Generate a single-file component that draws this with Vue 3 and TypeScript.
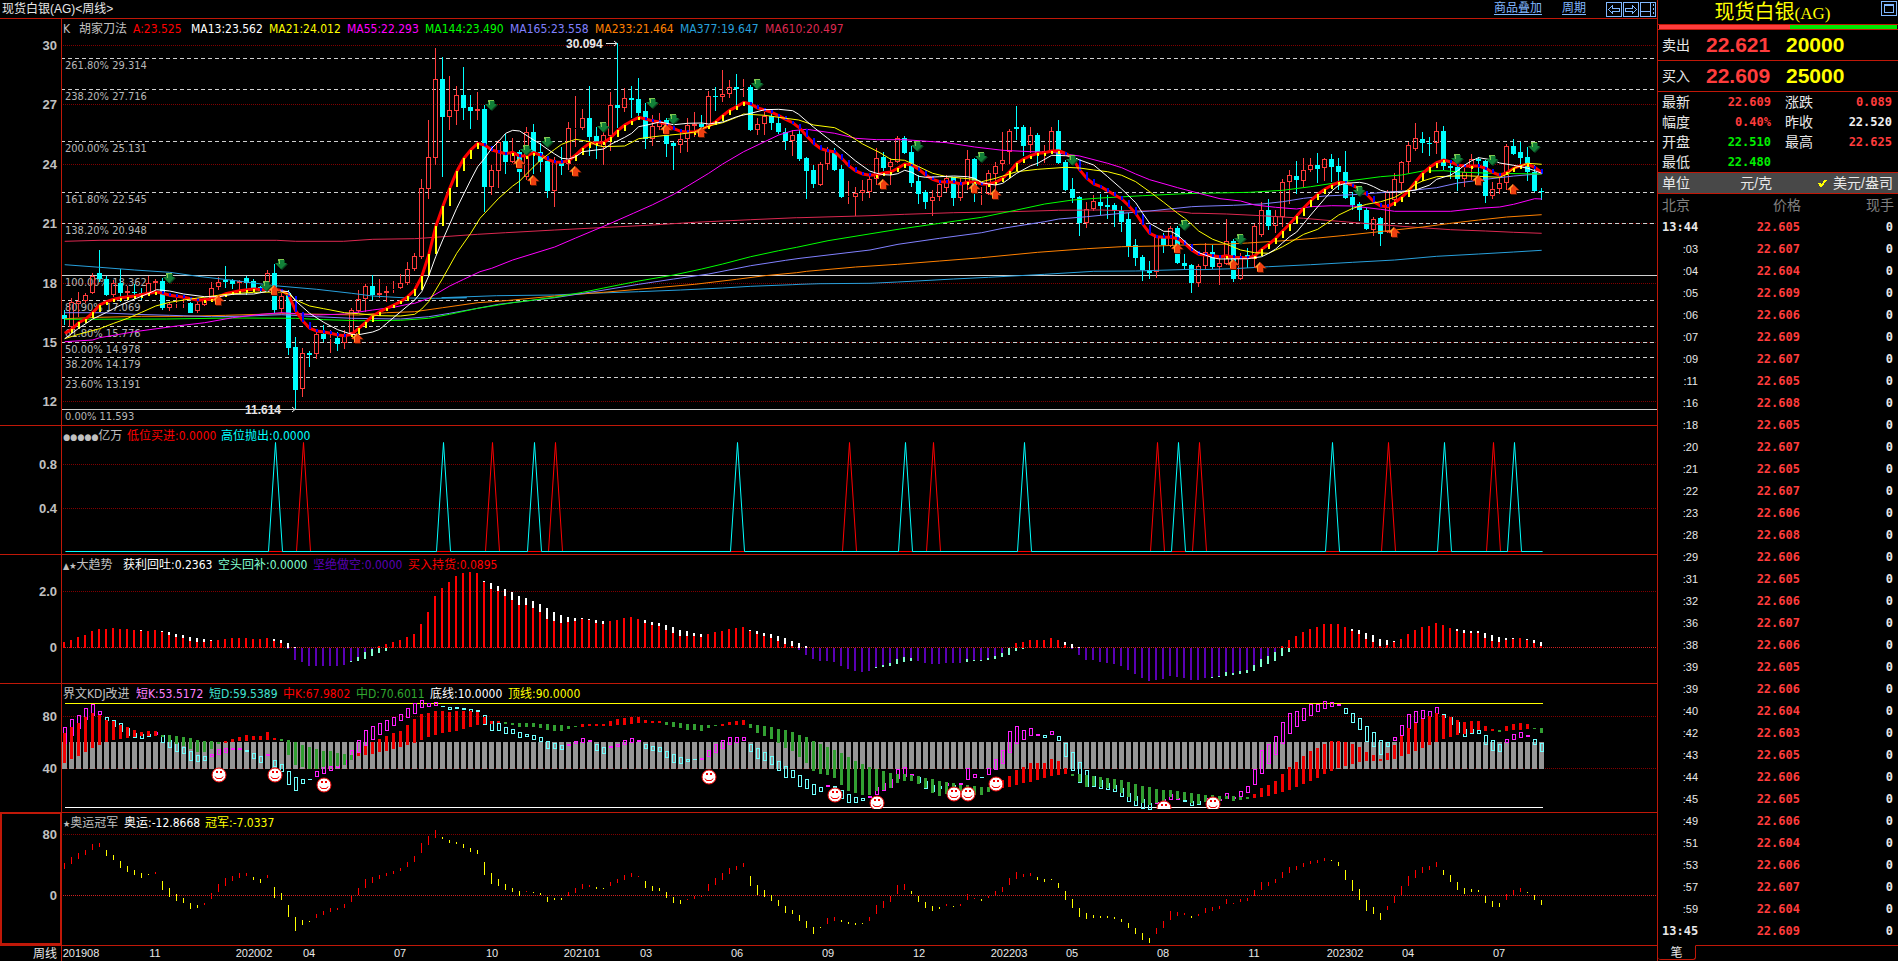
<script setup lang="ts">
interface LegendItem { text: string; color: string; width: number; badge?: string }
interface Bar { x: number; y: number; h: number; kind: string }

const STEP = 7
const FIRST = 64
const barX = (i: number): number => FIRST + STEP * i
const words = (s: string): string[] => s.trim().split(/\s+/)

/* ---------- price panel ---------- */
const PRICE_UNITS = 3
const toPx = (v: number): number => Math.round(v / PRICE_UNITS)

// direction + high, body top, body bottom, low (three units to a pixel)
const candleRows = `
d930,945,957,975 u893,905,980,985 u877,903,912,950 u880,885,902,910 u820,828,878,882 d750,819,838,845 d827,838,884,888 u840,850,884,890
d808,850,878,905 u857,873,878,900 d852,875,879,895 d865,878,882,900 u828,850,878,884 u838,843,850,870 d834,843,923,930 u905,913,923,933
u893,908,911,925 u898,908,910,923 d906,908,938,939 u905,912,934,938 u893,900,914,918 u845,865,893,898 u832,847,862,870 d798,839,845,865
d838,841,852,868 u840,844,848,873 d827,833,850,885 d838,843,864,870 d858,860,872,875 u810,819,845,872 d792,819,930,940 u880,888,928,940
d870,878,1044,1065 d1011,1041,1170,1227 u1045,1060,1168,1190 d1053,1059,1065,1101 u995,1003,1063,1077 d975,1001,1018,1027 u990,1013,1016,1060 d995,1014,1031,1052
u990,1003,1030,1047 u923,931,1000,1010 u870,898,932,940 u852,859,898,935 d826,858,886,900 u838,880,884,893 u858,874,880,905 u843,866,871,880
u822,850,864,868 u786,808,850,855 u760,768,808,812 u537,565,770,778 u360,472,566,597 u144,238,473,494 d170,238,350,530 u228,331,350,390
u258,286,332,375 d200,285,323,360 d285,321,332,387 u276,327,332,360 d315,327,560,635 u495,511,560,585 u420,427,512,563 d402,423,485,521
u415,457,485,490 d450,455,515,577 u381,397,530,540 d372,397,457,522 d430,455,486,515 d478,483,572,594 u470,485,572,620 d440,483,497,525
u366,384,492,510 u288,384,387,440 u327,355,385,390 d258,354,410,468 d380,408,430,477 u395,406,440,494 u276,316,407,452 d129,315,323,385
u264,295,323,335 d258,294,300,355 d234,297,338,347 d310,333,418,447 u345,378,418,437 u338,367,380,390 d355,360,432,471 d425,429,437,510
u390,417,436,458 u355,376,418,455 u336,372,377,410 d345,371,380,405 u273,289,380,385 d261,288,291,333 u210,283,290,305 u240,262,281,293
d222,262,267,318 u237,262,265,290 d255,262,390,393 u355,371,389,404 u335,347,371,405 d340,347,369,390 d350,368,395,402 d385,396,423,450
u390,406,423,467 d385,402,477,483 d470,474,513,597 d495,510,552,563 u486,493,554,558 u441,450,493,510 d444,457,510,514 d495,508,590,594
u543,588,592,612 u561,580,590,648 u540,571,580,603 u520,538,575,594 u444,475,536,555 d456,471,504,512 u475,485,500,555 u407,414,485,490
d408,414,459,462 d438,456,549,560 d525,543,582,612 d570,577,606,627 u570,592,602,648 u545,553,590,602 u525,535,563,577 d530,532,593,617
u535,550,593,603 u450,478,550,570 d473,477,583,606 u560,583,586,615 u510,520,583,585 u487,499,521,583 u396,479,493,513 u387,394,455,492
d318,381,386,420 d375,381,437,468 u381,406,434,460 d400,405,458,498 u435,452,458,489 u381,394,452,460 d360,393,489,492 d480,486,570,573
d534,567,594,609 d588,591,669,708 u606,628,668,684 u585,604,628,633 d583,606,618,645 d585,616,622,657 d609,615,632,681 d617,632,666,696
d640,657,738,771 d717,735,773,798 d765,771,811,843 d783,811,820,837 u705,710,816,834 d700,711,736,759 u678,685,738,742 d678,684,790,793
d762,789,798,810 d793,796,849,879 u793,799,849,861 u729,757,799,808 d735,756,801,808 u770,790,800,855 u657,724,792,795 d718,723,836,846
u760,767,836,840 d745,766,772,805 u672,679,778,803 u606,631,704,710 d597,630,678,690 u630,649,677,698 u537,547,652,680 u510,526,545,612
d483,528,541,582 u474,511,542,562 u474,496,510,515 d459,495,507,549 u473,478,503,543 d462,477,501,545 d474,498,516,570 d453,516,594,597
d575,591,615,630 d605,612,630,663 d625,630,687,690 u652,657,689,708 d650,654,702,738 u570,577,695,698 u519,538,600,610 u483,486,550,570
u426,436,487,518 u368,415,446,453 d396,417,429,460 d411,429,432,468 u365,394,430,462 d378,393,498,510 d490,498,504,537 d495,501,537,573
u505,517,537,561 u462,478,505,540 d470,477,483,528 d480,483,588,609 u546,568,588,597 u535,549,567,582 u432,438,549,570 d417,438,462,465
d426,456,474,495 d441,471,516,543 d495,516,573,577 d564,573,576,600`

const candles = words(candleRows).map((row, i) => {
  const [high, top, bottom, low] = row.slice(1).split(',').map(v => toPx(Number(v)))
  return { x: barX(i), up: row[0] === 'u', high, top, bottom: Math.max(bottom, top + 1), low }
})

// Each curve is stored in four stretches, 400 px apart
type Point = [number, number]
const curve = (...parts: string[]): Point[] =>
  parts.flatMap((part, n) => words(part).map((p): Point => {
    const [x, y] = p.split(',').map(Number)
    return [(x + n * 1200) / PRICE_UNITS, y / PRICE_UNITS]
  }))
const pointsOf = (c: Point[]): string => c.map(([x, y]) => `${x.toFixed(1)},${y.toFixed(1)}`).join(' ')

const knife = curve(
  '194,1000 215,988 236,968 257,957 278,938 299,915 320,905 341,898 362,893 404,888 446,880 470,876 488,880 509,886 551,892 593,901 635,897 656,890 677,881 719,872 761,867 803,870 824,868 845,872 866,885 887,933 908,962 929,985 950,993 971,996 992,1000 1013,1005 1034,1007 1055,1003 1076,985 1097,967 1118,948 1139,935 1160,925 1181,915 1202,905 1223,890 1244,870 1265,830 1286,765 1307,680 1328,620 1349,565 1370,515 1391,476 1412,450 1433,430',
  '254,435 275,450 296,456 317,461 338,457 359,468 380,467 401,458 422,465 443,478 464,486 485,487 506,482 527,465 548,445 569,430 590,428 611,428 632,413 653,392 674,375 695,363 716,352 737,357 758,363 779,366 800,374 821,386 842,394 863,397 884,395 905,388 926,378 947,365 968,347 989,331 1010,320 1031,307 1052,312 1073,324 1094,330 1115,337 1136,347 1157,358 1178,368 1199,384 1220,408 1241,430 1262,446 1283,452 1304,456 1325,475 1346,497 1367,513 1388,522 1409,526 1430,524',
  '251,519 272,516 293,505 314,492 335,494 356,508 377,525 398,538 419,545 461,547 482,552 503,547 524,545 545,552 566,552 587,547 608,535 629,515 650,490 671,477 692,467 713,460 734,458 755,453 776,452 797,460 818,475 839,510 860,535 881,552 902,560 923,572 944,585 965,597 986,617 1007,640 1028,672 1049,700 1070,710 1091,712 1112,712 1133,716 1154,730 1175,750 1196,763 1238,767 1259,770 1280,767 1301,772 1343,774 1364,768 1385,748 1406,733 1427,715',
  '248,693 269,672 290,648 311,624 332,602 353,583 374,568 395,556 416,547 437,548 458,556 479,567 500,583 521,605 542,618 563,620 584,608 605,592 626,572 647,545 668,520 689,502 710,488 731,480 752,486 773,495 794,498 836,498 857,505 878,517 899,526 920,518 941,505 962,497 983,493 1004,502 1025,518',
)

const valueAt = (c: Point[], x: number): number => {
  for (let k = 1; k < c.length; k++) {
    const [x0, y0] = c[k - 1]
    const [x1, y1] = c[k]
    if (x <= x1) return y0 + ((y1 - y0) * (x - x0)) / (x1 - x0)
  }
  return c[c.length - 1][1]
}
const slopes = candles.slice(1).map(({ x }) => {
  const now = valueAt(knife, x + 1)
  const before = valueAt(knife, x + 1 - STEP)
  const rising = now <= before
  const h = Math.max(3, Math.round(Math.abs(now - before)))
  return { x, y: Math.round(rising ? now : now - h + 1), h, color: rising ? '#ffff00' : '#0000ff' }
})

const averages = [
  { color: '#dc2850', points: pointsOf(curve('194,724 300,721 830,721 887,724 1030,724 1118,718 1244,716 1433,703', '317,698 464,690 600,683 758,675 884,667 1052,659 1190,653', '0,653 210,647 314,643 461,638 629,635 776,631 902,630 965,632 1133,634 1175,640', '0,640 80,642 185,647 311,655 416,664 542,674 647,682 752,689 857,693 941,697 1025,700')) },
  { color: '#28a0dc', points: pointsOf(curve('194,794 299,802 404,810 509,817 593,829 698,841 824,857 950,868 1055,880 1118,888 1223,894 1307,895 1400,893', '125,893 290,887 464,885 569,880 716,875 842,870 968,864 1052,859 1178,854', '0,853 60,851 210,850 293,846 461,837 566,832 734,823 881,814 1007,813 1175,808', '0,809 101,806 206,800 332,794 458,787 584,780 710,769 836,762 941,756 1025,751')) },
  { color: '#ff8000', points: pointsOf(curve('194,956 299,952 425,949 551,949 677,946 845,941 971,943 1076,945 1160,938 1244,935 1328,923 1433,908', '317,902 464,888 611,877 758,864 884,853 1010,838 1094,827 1190,818', '20,814 167,801 293,793 419,783 545,773 713,757 860,746 965,740 1070,738 1175,734', '0,733 60,733 143,729 269,721 353,714 437,706 521,697 584,690 668,681 752,670 836,660 920,651 1025,644')) },
  { color: '#8080ff', points: pointsOf(curve('194,938 299,938 404,943 509,946 635,950 719,949 845,944 950,950 1055,955 1202,957 1286,950 1349,940 1433,925', '296,913 464,893 600,872 716,853 821,837 926,822 1052,797 1157,781', '0,775 84,765 210,750 294,733 419,715 545,698 608,685 734,665 776,657 860,650 965,640 1049,633 1175,620', '0,619 100,616 185,612 248,605 311,595 374,588 458,584 542,578 626,572 710,563 773,549 857,538 941,528 1025,521')) },
  { color: '#00ff00', points: pointsOf(curve('194,958 500,957 698,954 887,955 971,959 1076,962 1202,961 1286,955 1349,943 1433,925', '338,908 464,892 548,877 611,864 716,843 821,825 905,807 968,792 1052,770 1136,752 1190,742', '84,722 294,688 419,670 545,652 650,630 734,612 818,600 902,594 1028,587 1154,581', '0,580 150,577 248,571 332,560 437,544 542,530 605,525 668,513 731,512 794,517 878,520 1025,522')) },
  { color: '#ff00ff', points: pointsOf(curve('194,1025 278,1020 299,1013 404,995 530,978 614,968 698,953 782,943 845,938 950,945 1034,942 1118,930 1181,922 1223,913 1244,910 1286,895 1349,858 1391,838 1440,815', '275,805 338,780 464,741 527,714 632,670 700,640 758,614 821,583 863,558 926,520 968,492 1031,455 1094,425 1136,405 1178,392', '20,388 104,400 167,415 230,419 314,419 440,428 524,441 608,451 692,455 755,457 839,468 923,490 965,503 1007,522 1049,539 1133,563 1190,578', '60,596 122,603 164,615 227,622 290,627 332,620 395,617 458,618 542,628 584,634 752,634 836,625 899,621 941,613 1004,596 1025,597')) },
]
const fastAverages = [
  { color: '#ffff00', points: pointsOf(curve('194,1016 236,1003 299,986 341,970 383,955 425,937 467,918 509,907 551,900 593,894 677,883 761,877 845,876 866,882 887,900 929,918 971,926 1034,938 1076,941 1139,947 1202,948 1244,943 1265,927 1286,905 1307,870 1328,835 1370,760 1412,700 1440,655', '254,640 296,595 338,558 359,543 401,500 422,480 443,464 464,448 485,433 506,425 527,418 569,425 590,436 611,440 674,438 716,416 779,408 842,402 884,396 926,378 968,368 1010,352 1031,342 1094,346 1157,355 1196,360', '41,375 104,383 146,405 188,432 240,458 272,478 314,481 356,500 398,520 440,530 482,534 524,538 545,545 587,535 608,528 650,515 713,508 797,502 839,504 881,510 923,515 965,526 1007,545 1049,575 1091,607 1133,640 1154,655 1175,673 1196,693', '38,718 80,733 122,750 164,758 206,760 227,750 248,740 269,728 311,703 353,688 395,660 416,645 458,625 500,613 542,605 584,592 626,568 647,552 668,543 710,530 794,527 899,532 920,523 941,505 983,490 1025,493')) },
  { color: '#ffffff', points: pointsOf(curve('194,1016 236,985 278,957 320,937 362,915 404,897 446,880 470,869 509,873 551,882 614,890 656,890 698,883 761,882 803,874 845,873 866,875 887,903 929,940 971,967 1013,989 1055,1003 1076,1004 1118,996 1139,988 1160,970 1202,935 1244,900 1265,875 1286,828 1307,770 1328,720 1370,625 1412,540 1433,500', '254,475 275,445 296,424 317,400 338,391 359,393 401,420 422,433 443,448 464,462 485,475 506,477 527,470 548,455 611,447 632,433 674,412 695,400 716,380 737,376 779,366 821,374 863,370 905,369 926,372 968,366 1010,350 1052,340 1094,329 1136,328 1178,332 1196,343', '41,382 83,415 125,448 167,483 209,513 230,520 251,524 272,525 293,521 314,511 335,517 356,529 377,532 419,530 461,528 503,530 524,535 545,548 566,552 587,555 608,550 650,520 692,497 713,490 755,466 797,467 818,470 839,480 881,495 923,530 965,567 1007,608 1028,640 1049,670 1091,694 1112,694 1133,705 1175,743 1196,758', '38,773 59,777 143,776 185,770 206,760 227,747 248,728 269,710 290,696 332,645 374,596 395,573 416,556 437,550 479,547 500,551 521,560 542,571 563,577 605,576 647,570 689,555 710,538 752,525 773,512 794,495 815,482 836,473 878,480 899,489 941,496 983,505 1004,512 1025,520')) },
]
const knifePoints = pointsOf(knife)

const priceAxis = [[30, 45], [27, 104], [24, 164], [21, 223], [18, 283], [15, 342], [12, 401]]
const fibs: { label: string; y: number; solid?: boolean }[] = [
  { label: '261.80% 29.314', y: 58 }, { label: '238.20% 27.716', y: 89 }, { label: '200.00% 25.131', y: 141 },
  { label: '161.80% 22.545', y: 192 }, { label: '138.20% 20.948', y: 223 }, { label: '100.00% 18.362', y: 275, solid: true },
  { label: '80.90% 17.069', y: 300 }, { label: '61.80% 15.776', y: 326 }, { label: '50.00% 14.978', y: 342 },
  { label: '38.20% 14.179', y: 357 }, { label: '23.60% 13.191', y: 377 }, { label: '0.00% 11.593', y: 409, solid: true },
]
const marks = (s: string): Point[] => words(s).map((p): Point => {
  const [x, y] = p.split(',').map(v => toPx(Number(v)))
  return [x, y]
})
const sells = marks('506,835 842,793 799,858 1472,316 1577,450 1640,427 1808,380 1955,310 2018,358 2270,253 2752,439 2942,472 3215,481 3551,676 3719,717 4076,573 4370,478 4475,481 4601,442')
const buys = marks('653,900 821,870 1072,1013 1556,489 1598,541 1724,514 1998,388 2102,397 2648,552 2921,563 2984,582 3530,744 3698,792 3781,801 4181,697 4433,541 4538,568')

/* ---------- signal panel ---------- */
const spikes = (list: number[]): string => {
  const steps = list.map(i => `${barX(i) - 7},551 ${barX(i)},442 ${barX(i) + 7},551`)
  return `64,551 ${steps.join(' ')} 1541,551`
}
const buySpikes = spikes([34, 61, 70, 112, 124, 156, 162, 189, 204])
const sellSpikes = spikes([30, 54, 67, 96, 120, 137, 159, 181, 197, 207])

/* ---------- trend panel: outer/inner/opposite heights ---------- */
const trendRows = `
6 8 11 13 17 19 19 20 19 19 18 18/17 17 18 17/16 16/13 14/11 13/10 11/7 10/6 9/6 8/7 8 9 10 10 10 9 9 10 9/7 8/5 5/0/-1 1/0/-12 -14 -18 -18 -18 -18 -18
-17 -14/-13 -13/-9 -11/-4 -8/-1 -5/0/2 -3/0/4 6 8 11 14 24 36 52 60 66 72 75 76 75 67/66 65/59 62/57 59/52 56/48 52/43 50/43 47/40 44/36 40/29 36/27 33/25 31/26 30/27 30/29 29/28 28/25 27/24 27 28
30 31 29 28/25 26/23 25/22 23/18 21/15 18/12 17/12 15/12 14/11 14 16 17 19 20 21 18/17 17/14 15/12 14/10 12/7 10/4 7/2 5/0/-2 2/0/-7 -11 -13 -13 -14 -18 -21 -23 -24 -23 -20/-19 -19/-17 -18/-15 -16/-11
-14/-9 -13/-10 -13 -15 -16 -16 -15 -15 -15 -14/-11 -13/-12 -13/-12 -12/-10 -11/-8 -9/-5 -7/0 -3/0/5 -1/0/6 8 8 8 10 8 6/3 4/0/-1 1/0/-7 -12 -12 -14 -15 -16 -18 -22 -26 -30 -33 -32 -31 -28 -29
-30 -32 -32 -30 -30/-29 -29/-28 -28/-24 -27/-25 -26/-23 -25/-22 -23/-17 -19/-11 -16/-8 -13/-4 -8/0/2 -4/0/8 12 16 19 21 24 24 24 21 19/17 18/14 15/9 13/6 9/2 8/3 7/6 9 14 18 21 22 25 23 20 19/17
18/15 17/15 17/15 15/10 13/7 11/6 10/8 10/9 10 9/8 8/5 6/2`
const ZERO = 648
const trendBars: Bar[] = words(trendRows).flatMap((row, i) => {
  const [outer, inner = outer, opposite = 0] = row.split('/').map(Number)
  const x = barX(i) - 1
  const span = (from: number, to: number, kind: string): Bar[] =>
    from === to ? [] : [{ x, y: ZERO - Math.max(from, to), h: Math.abs(from - to), kind }]
  return [
    ...span(inner, 0, inner > 0 ? '#ff0000' : '#5a00b4'),
    ...span(outer, inner, outer > 0 ? '#ffffff' : '#80ffd0'),
    ...span(opposite, 0, opposite > 0 ? '#ff0000' : '#5a00b4'),
  ]
})

/* ---------- KDJ panel ---------- */
const ranges = (rows: string, base: number): Bar[] => words(rows).map((row, i) => {
  const [top, bottom] = row.slice(1).split('-').map(Number)
  return { x: barX(i), y: base + top, h: Math.max(1, bottom - top), kind: row[0] }
})
const midBars = ranges(`
R33-63 R27-59 R23-56 R17-52 R13-48 R15-45 R20-42 R21-40 R25-39 R27-38 R30-37 R32-36 R31-36 R31-36 G35-37 G35-42 G36-44 G37-46 G38-49 G40-52 G41-52 G41-49 G42-44 R41-43
R39-42 R37-41 R35-41 R36-40 R36-40 R32-40 R38-40 G39-41 G40-55 G42-65 G45-67 G47-69 G49-69 G51-67 G51-66 G53-66 G54-65 G55-60 R53-56 R46-55 R42-54 R39-52 R36-51 R33-49
R31-47 R25-45 R19-43 R14-40 R13-37 R11-35 R11-33 R12-32 R11-31 R11-29 R11-27 R12-25 R17-24 R21-24 R21-23 G22-24 G23-25 G23-27 G23-27 G23-27 G24-28 G24-30 G25-31 G25-31
G26-29 G26-27 R24-27 R24-26 R24-26 R24-26 R21-26 R19-25 R18-25 R17-24 R17-23 R20-23 R21-23 R21-23 G22-25 G22-27 G23-28 G24-30 G24-30 G25-31 G25-28 G25-26 R24-26 R22-25
R21-25 R20-25 G24-28 G25-33 G26-36 G27-39 G29-43 G30-48 G32-51 G35-57 G37-63 G41-71 G44-74 G47-75 G50-78 G53-85 G57-91 G61-93 G64-95 G67-95 G69-91 G71-90 G73-88 G74-83
G74-81 G75-81 G76-84 G78-88 G79-93 G81-96 G82-94 G83-94 G85-94 G85-95 G86-95 G87-95 G87-92 R85-90 R80-88 R76-87 R70-85 R67-83 R63-82 R63-80 R63-78 R59-76 R61-75 R68-74
G74-76 G74-82 G75-87 G76-86 G77-87 G78-88 G79-89 G80-93 G82-97 G84-101 G86-103 G87-105 G89-103 G90-101 G90-97 G91-99 G92-100 G93-103 G94-104 G95-102 G95-100 G96-101 G96-99 G96-101
G97-100 G97-99 R94-98 R88-97 R85-96 R81-94 R74-92 R67-90 R62-87 R56-84 R51-81 R48-78 R44-74 R41-71 R41-68 R42-66 R44-64 R47-62 R52-61 R55-61 R59-61 R53-60 R45-59 R36-56
R28-54 R23-51 R19-48 R16-45 R13-42 R15-39 R17-37 R20-35 R22-34 R21-33 R21-30 R26-31 R29-31 G30-32 R26-31 R24-30 R23-30 R24-29 G28-29 G28-33`, 700)
const shortBars = ranges(`
M27-44 M19-36 M15-29 M8-20 M4-16 M11-15 C17-21 C20-27 C23-32 C28-36 C33-38 C34-39 C34-37 M32-35 C35-43 C40-48 C43-52 C47-54 C51-61 C55-62 C56-61 M54-57 M49-55 M48-53
M48-50 M48-50 C50-52 C53-59 C56-63 M54-56 C60-67 C64-72 C71-85 C77-91 C79-84 C79-80 M71-77 M66-74 M66-71 M65-68 M60-65 M50-60 M40-53 M30-46 M26-40 M23-35 M20-31 M17-26
M14-21 M8-18 M3-14 M0-8 M3-7 M2-6 C6-7 C7-10 C7-9 C8-10 C9-12 C10-12 C15-25 C21-31 C23-31 C27-34 C29-34 C32-38 C34-37 C35-40 C37-42 C41-49 C43-49 C45-50
M44-46 M41-44 M38-43 M40-42 C44-51 C47-54 M46-48 M44-47 M40-45 M38-43 M40-42 C44-49 C46-51 C47-52 C51-58 C54-63 C57-64 C59-62 C59-60 M58-60 M50-57 M44-53 M40-49 M37-45
M37-43 M37-41 C44-52 C48-59 C52-61 C56-65 C61-71 C66-78 C70-78 C75-87 C79-89 C84-95 C87-92 M85-87 C86-88 C90-99 C94-103 C97-103 C98-101 M96-98 M87-95 M83-91 M79-88 M69-79
M67-77 M74-76 C77-83 C81-89 C85-92 C86-89 M83-86 C85-87 M83-85 M68-80 M74-78 C77-78 M68-75 M59-70 M50-64 M31-53 M26-44 M30-40 M28-36 M34-36 C35-38 M31-35 C36-41 C43-57
C52-71 C62-83 C70-87 C76-87 C80-89 C83-90 C85-92 C88-97 C93-102 C96-106 C99-109 C103-110 M102-104 M99-103 M94-100 M98-100 C100-102 C101-106 C101-105 M98-101 M97-101 M99-101 M93-99 M97-99
M91-97 M86-93 M69-85 M50-74 M44-64 M36-55 M22-44 M13-34 M11-27 M8-21 M4-16 M4-12 M1-9 M2-7 M4-6 C8-14 C13-23 C18-30 C26-42 C32-47 C40-55 C42-47 M37-41 M25-36
M14-29 M11-23 M10-19 M11-17 M7-14 C14-18 C17-25 C22-33 C29-37 C29-34 C30-34 C35-45 C40-51 C44-52 M39-43 M34-40 M32-38 M35-37 C39-45 C43-52`, 700)
const smiles: Point[] = [[22, 775], [30, 775], [37, 785], [92, 777], [110, 795], [116, 803], [127, 794], [129, 794], [133, 784], [157, 808], [164, 804]]

/* ---------- momentum panel ---------- */
const momentumBars = ranges(`
R63-69 R57-64 R53-59 R50-55 R44-50 R43-47 Y50-56 Y55-60 Y61-68 Y66-72 Y70-75 Y73-78 Y74-75 R72-74 Y81-90 Y88-97 Y94-101 Y98-103 Y103-109 Y105-108 R103-105 R93-99 R84-92 R78-86
R76-81 R73-78 R73-76 Y77-80 Y79-83 R75-78 Y87-98 Y93-100 Y105-117 Y117-131 Y120-125 Y121-122 R114-118 R111-115 R108-112 R108-110 R104-108 R96-102 R88-95 R79-88 R77-83 R75-79 R73-76 R71-74
R68-71 R62-67 R56-62 R43-53 R36-45 R30-38 Y37-39 Y40-43 Y42-44 Y44-48 Y48-52 Y50-54 Y62-75 Y73-84 Y79-86 Y84-90 Y88-92 Y91-96 R91-92 Y92-93 Y93-95 Y97-102 Y98-100 Y98-100
R92-96 R88-93 R84-89 R85-87 Y87-89 Y88-89 R82-86 R79-83 R75-80 R73-77 R76-77 Y81-88 Y86-91 Y88-91 Y92-98 Y97-103 Y100-104 R99-100 R96-99 R96-97 R84-91 R78-85 R73-80 R68-74
R66-70 R63-67 Y76-86 Y85-95 Y90-97 Y95-101 Y100-106 Y106-113 Y110-114 Y115-121 Y121-128 Y127-134 Y127-128 R118-124 R117-121 Y120-122 Y122-124 Y123-125 Y123-124 R117-121 R105-114 R101-108 R96-102 R85-94
R84-90 Y91-94 Y96-102 Y102-108 Y106-111 Y107-109 R104-106 Y106-107 R104-106 R94-100 R98-99 Y99-101 R96-98 R91-95 R87-92 R78-85 R72-79 R74-77 R73-76 Y77-80 Y79-82 Y79-80 Y83-88 Y91-100
Y99-108 Y108-117 Y113-119 Y115-118 Y116-118 Y116-118 Y117-119 Y119-122 Y123-128 Y128-134 Y133-140 Y138-143 R128-134 R121-128 R111-120 R112-116 R113-115 Y116-118 R114-116 R108-113 R107-111 R106-109 R99-104 R103-104
R99-102 R98-101 R90-96 R82-90 R82-86 R79-83 R72-78 R67-73 R66-70 R63-67 R61-64 R60-63 R58-61 Y60-61 Y62-66 Y70-80 Y80-91 Y89-100 Y100-111 Y107-114 Y113-120 R106-110 R96-103 R86-95
R76-86 R70-78 R67-73 R66-70 R62-67 Y70-75 Y75-82 Y82-90 Y88-94 Y89-92 Y90-92 Y96-103 Y101-107 Y103-107 R94-100 R90-95 R88-92 Y92-93 Y95-100 Y100-105`, 800)

/* ---------- legends ---------- */
const item = (text: string, color: string, width: number, badge?: string): LegendItem => ({ text, color, width, badge })
const GRAY = '#c0c0c0'
const priceLegend = [
  item('K', GRAY, 16), item('胡家刀法', GRAY, 54), item('A:23.525', '#ff0000', 58), item('MA13:23.562', '#ffffff', 78),
  item('MA21:24.012', '#ffff00', 78), item('MA55:22.293', '#ff00ff', 78), item('MA144:23.490', '#00ff00', 85),
  item('MA165:23.558', '#8080ff', 85), item('MA233:21.464', '#ff8000', 85), item('MA377:19.647', '#28a0dc', 85), item('MA610:20.497', '#dc2850', 85),
]
const signalLegend = [item('亿万', GRAY, 64, '●●●●●'), item('低位买进:0.0000', '#ff0000', 94), item('高位抛出:0.0000', '#00ffff', 94)]
const trendLegend = [
  item('大趋势', GRAY, 60, '▲★'), item('获利回吐:0.2363', '#ffffff', 95), item('空头回补:0.0000', '#80ffd0', 95),
  item('坚绝做空:0.0000', '#5a00b4', 95), item('买入持货:0.0895', '#ff0000', 95),
]
const kdjLegend = [
  item('界文KDJ改进', GRAY, 73), item('短K:53.5172', '#ff80ff', 73), item('短D:59.5389', '#40e0d0', 74), item('中K:67.9802', '#ff0000', 73),
  item('中D:70.6011', '#30a830', 74), item('底线:10.0000', '#ffffff', 78), item('顶线:90.0000', '#ffff00', 78),
]
const momentumLegend = [item('奥运冠军', GRAY, 61, '★'), item('奥运:-12.8668', '#ffffff', 81), item('冠军:-7.0337', '#ffff00', 76)]

const dates: [string, number][] = [
  ['201908', 81], ['11', 155], ['202002', 254], ['04', 309], ['07', 400], ['10', 492], ['202101', 582], ['03', 646], ['06', 737],
  ['09', 828], ['12', 919], ['202203', 1009], ['05', 1072], ['08', 1163], ['11', 1254], ['202302', 1345], ['04', 1408], ['07', 1499],
]

/* ---------- quote board ---------- */
const offers = [{ label: '卖出', price: '22.621', volume: '20000' }, { label: '买入', price: '22.609', volume: '25000' }]
const quotes = [
  { label: '最新', value: '22.609', tone: 'up' }, { label: '涨跌', value: '0.089', tone: 'up' },
  { label: '幅度', value: '0.40%', tone: 'up' }, { label: '昨收', value: '22.520', tone: 'flat' },
  { label: '开盘', value: '22.510', tone: 'down' }, { label: '最高', value: '22.625', tone: 'up' },
  { label: '最低', value: '22.480', tone: 'down' },
]
const ticks = words(`13:44=22.605 :03=22.607 :04=22.604 :05=22.609 :06=22.606 :07=22.609 :09=22.607 :11=22.605 :16=22.608 :18=22.605 :20=22.607
:21=22.605 :22=22.607 :23=22.606 :28=22.608 :29=22.606 :31=22.605 :32=22.606 :36=22.607 :38=22.606 :39=22.605 :39=22.606 :40=22.604 :42=22.603
:43=22.605 :44=22.606 :45=22.605 :49=22.606 :51=22.604 :53=22.606 :57=22.607 :59=22.604 13:45=22.609`).map(row => {
  const [time, price] = row.split('=')
  return { time, price, minute: !time.startsWith(':') }
})
</script>

<template>
  <div class="terminal">
    <main class="charts">
      <header class="bar">
        <h1>现货白银(AG)&lt;周线&gt;</h1>
        <nav>
          <a href="#overlay">商品叠加</a>
          <a href="#period">周期</a>
          <span class="tools">
            <button type="button" aria-label="向左"><svg width="16" height="15"><rect x=".5" y=".5" width="15" height="14" /><path d="M2.5 7.5l4-4v2.5h7v3h-7v2.5z" /></svg></button>
            <button type="button" aria-label="向右"><svg width="16" height="15"><rect x=".5" y=".5" width="15" height="14" /><path d="M13.5 7.5l-4-4v2.5h-7v3h7v2.5z" /></svg></button>
            <button type="button" aria-label="布局"><svg width="16" height="15"><rect x=".5" y=".5" width="15" height="14" /><path d="M0 9.500h10M10.500 1v13" /><path d="M13.500 2v12" stroke-dasharray="2 2" /></svg></button>
          </span>
        </nav>
      </header>

      <section class="panel">
        <svg class="plot" width="100%" height="406">
          <g transform="translate(0,-19)">
            <g v-for="[price, y] in priceAxis" :key="price">
              <line class="grid" x1="63" :y1="y + .5" x2="100%" :y2="y + .5" />
              <text class="scale" x="57" :y="y + 5">{{ price }}</text>
            </g>
            <g v-for="f in fibs" :key="f.y">
              <line :class="f.solid ? 'fib solid' : 'fib'" x1="61" :y1="f.y + .5" x2="100%" :y2="f.y + .5" />
              <text class="fib-label" x="65" :y="f.y + 11">{{ f.label }}</text>
            </g>
            <g class="crisp">
              <template v-for="c in candles" :key="c.x">
                <template v-if="c.up">
                  <rect class="red" :x="c.x" :y="c.high" width="1" :height="c.top - c.high" />
                  <rect class="red" :x="c.x" :y="c.bottom" width="1" :height="c.low - c.bottom" />
                  <rect class="hollow" :x="c.x - 1.5" :y="c.top + .5" width="4" :height="c.bottom - c.top - 1" />
                </template>
                <template v-else>
                  <rect class="cyan" :x="c.x" :y="c.high" width="1" :height="c.low - c.high" />
                  <rect class="cyan" :x="c.x - 2" :y="c.top" width="5" :height="c.bottom - c.top" />
                </template>
              </template>
            </g>
            <polyline v-for="a in averages" :key="a.color" class="line" :points="a.points" :stroke="a.color" />
            <polyline class="line knife" :points="knifePoints" />
            <rect v-for="s in slopes" :key="s.x" class="crisp" :x="s.x" :y="s.y" width="2" :height="s.h" :fill="s.color" />
            <polyline v-for="a in fastAverages" :key="a.color" class="line" :points="a.points" :stroke="a.color" />
            <g v-for="[x, y] in sells" :key="`s${x}`" :transform="`translate(${x},${y})`">
              <path d="M-1-4h5v4h3l-6 6-5-5z" fill="#0a4620" />
              <path d="M-3-5h6v4h3l-6 6-6-6h3z" fill="#128038" />
              <path d="M-3-5h6v1h-4v4h-1v-3h-1z" fill="#7ec850" />
            </g>
            <g v-for="[x, y] in buys" :key="`b${x}`" :transform="`translate(${x},${y})`">
              <path d="M-2 6h6v-4h3l-6-6-6 6h3z" fill="#501400" />
              <path d="M-3 5h6v-4h3l-6-6-6 6h3z" fill="#f04010" />
              <path d="M-5 0l5-5v2l-2 2v5h-1v-4z" fill="#ffa030" />
            </g>
            <text class="extreme" x="566" y="48">30.094</text>
            <path class="pointer" d="M606 43.500h11M614 41l3 2.500-3 2.500" />
            <text class="extreme" x="245" y="414">11.614</text>
            <path class="pointer" d="M292 407l3 2.500-3 2.500" />
            <line class="fib solid" x1="61" y1="409.500" x2="100%" y2="409.500" />
            <line class="frame" x1="61.500" y1="19" x2="61.500" y2="425" />
          </g>
        </svg>
        <ul class="legend"><li v-for="l in priceLegend" :key="l.text" :style="{ color: l.color, width: l.width + 'px' }">{{ l.text }}</li></ul>
      </section>

      <section class="panel">
        <svg class="plot" width="100%" height="128">
          <g transform="translate(0,-426)">
            <line class="grid" x1="63" y1="464.500" x2="100%" y2="464.500" />
            <line class="grid" x1="63" y1="508.500" x2="100%" y2="508.500" />
            <text class="scale" x="57" y="469">0.8</text>
            <text class="scale" x="57" y="513">0.4</text>
            <g transform="translate(1.5,.5)">
              <polyline class="line" :points="buySpikes" stroke="#ff0000" />
              <polyline class="line" :points="sellSpikes" stroke="#00ffff" />
            </g>
            <line class="frame" x1="61.500" y1="426" x2="61.500" y2="554" />
          </g>
        </svg>
        <ul class="legend"><li v-for="l in signalLegend" :key="l.text" :style="{ color: l.color, width: l.width + 'px' }"><i v-if="l.badge">{{ l.badge }}</i>{{ l.text }}</li></ul>
      </section>

      <section class="panel">
        <svg class="plot" width="100%" height="128">
          <g transform="translate(0,-555)">
            <line class="grid" x1="63" y1="591.500" x2="100%" y2="591.500" />
            <line class="grid zero" x1="63" y1="647.500" x2="100%" y2="647.500" />
            <text class="scale" x="57" y="596">2.0</text>
            <text class="scale" x="57" y="652">0</text>
            <rect v-for="(b, i) in trendBars" :key="i" class="crisp" :x="b.x" :y="b.y" width="2" :height="b.h" :fill="b.kind" />
            <line class="frame" x1="61.500" y1="555" x2="61.500" y2="683" />
          </g>
        </svg>
        <ul class="legend"><li v-for="l in trendLegend" :key="l.text" :style="{ color: l.color, width: l.width + 'px' }"><i v-if="l.badge">{{ l.badge }}</i>{{ l.text }}</li></ul>
      </section>

      <section class="panel">
        <svg class="plot" width="100%" height="128">
          <defs><clipPath id="kdj-area"><rect x="62" y="684" width="1500" height="125" /></clipPath></defs>
          <g transform="translate(0,-684)">
            <line class="grid" x1="63" y1="716.500" x2="100%" y2="716.500" />
            <line class="grid" x1="63" y1="768.500" x2="100%" y2="768.500" />
            <text class="scale" x="57" y="721">80</text>
            <text class="scale" x="57" y="773">40</text>
            <g class="crisp">
              <rect x="65" y="703" width="1478" height="1" fill="#ffff00" />
              <rect x="65" y="807" width="1478" height="1" fill="#ffffff" />
              <rect v-for="b in midBars" :key="b.x" :x="b.x - 2" y="742" width="5" height="27" fill="#969696" />
              <template v-for="b in shortBars" :key="b.x">
                <rect v-if="b.h > 2" :x="b.x - .5" :y="b.y + .5" width="3" :height="b.h - 1" fill="none" :stroke="b.kind === 'M' ? '#ff20ff' : '#70ffff'" />
                <rect v-else :x="b.x - 1" :y="b.y" width="4" :height="b.h" :fill="b.kind === 'M' ? '#ff20ff' : '#70ffff'" />
              </template>
              <rect v-for="b in midBars" :key="b.x" :x="b.x - 1" :y="b.y" width="3" :height="b.h" :fill="b.kind === 'R' ? '#f00000' : '#32a032'" />
            </g>
            <g clip-path="url(#kdj-area)">
              <g v-for="[i, y] in smiles" :key="i" :transform="`translate(${barX(i) + 1},${y})`">
                <circle r="7" fill="#fff" stroke="#f00000" />
                <path d="M-3-4h2v2h-2zM1-4h2v2h-2z" fill="#f00000" />
                <path d="M-4 1.500q1 2 2 2h4q1 0 2-2" fill="none" stroke="#f00000" />
              </g>
            </g>
            <line class="frame" x1="61.500" y1="684" x2="61.500" y2="812" />
          </g>
        </svg>
        <ul class="legend"><li v-for="l in kdjLegend" :key="l.text" :style="{ color: l.color, width: l.width + 'px' }">{{ l.text }}</li></ul>
      </section>

      <section class="panel">
        <svg class="plot" width="100%" height="132">
          <g transform="translate(0,-813)">
            <line class="grid" x1="63" y1="834.500" x2="100%" y2="834.500" />
            <line class="grid zero" x1="63" y1="895.500" x2="100%" y2="895.500" />
            <text class="scale" x="57" y="839">80</text>
            <text class="scale" x="57" y="900">0</text>
            <rect v-for="b in momentumBars" :key="b.x" class="crisp" :x="b.x" :y="b.y" width="1" :height="b.h" :fill="b.kind === 'R' ? '#ff0000' : '#ffff00'" />
            <rect class="selected" x="1" y="813" width="60" height="131" />
          </g>
        </svg>
        <ul class="legend"><li v-for="l in momentumLegend" :key="l.text" :style="{ color: l.color, width: l.width + 'px' }"><i v-if="l.badge">{{ l.badge }}</i>{{ l.text }}</li></ul>
      </section>

      <footer>
        <svg class="plot" width="100%" height="15">
          <text class="date period" x="57" y="12">周线</text>
          <text v-for="[label, x] in dates" :key="x" class="date" :x="x" y="11">{{ label }}</text>
          <line class="frame" x1="61.500" y1="0" x2="61.500" y2="15" />
        </svg>
      </footer>
    </main>

    <aside class="board">
      <header class="title">
        <h2>现货白银<span>(AG)</span></h2>
        <button type="button" aria-label="窗口"><svg width="16" height="15"><rect x=".5" y=".5" width="15" height="14" /><rect x="3.500" y="3.500" width="9" height="8" /><path d="M3 4.500h10" /></svg></button>
      </header>
      <div class="ratio"><i></i></div>
      <div v-for="o in offers" :key="o.label" class="offer">
        <span>{{ o.label }}</span><b class="up">{{ o.price }}</b><b class="volume">{{ o.volume }}</b>
      </div>
      <dl class="quotes">
        <div v-for="q in quotes" :key="q.label"><dt>{{ q.label }}</dt><dd :class="q.tone">{{ q.value }}</dd></div>
      </dl>
      <div class="units">
        <span>单位</span>
        <button type="button" class="gram">元/克</button>
        <button type="button" class="ounce"><svg width="9" height="9"><path d="M1 4l2 3 5-6" /></svg>美元/盎司</button>
      </div>
      <table>
        <thead><tr><th>北京</th><th>价格</th><th>现手</th></tr></thead>
        <tbody>
          <tr v-for="(t, i) in ticks" :key="i">
            <td :class="t.minute ? 'minute' : 'second'">{{ t.time }}</td><td class="up">{{ t.price }}</td><td>0</td>
          </tr>
        </tbody>
      </table>
      <div class="tabs"><button type="button">笔</button></div>
    </aside>
  </div>
</template>

<style>
body { margin: 0; background: #000; }
</style>

<style scoped>
.terminal { display: flex; min-height: 100vh; overflow: hidden; background: #000; color: #e8e8e8; font: 12px/14px "DejaVu Sans Condensed", "Noto Sans CJK SC", sans-serif; }
.charts { flex: 1; min-width: 0; }
.bar { display: flex; justify-content: space-between; height: 18px; border-bottom: 1px solid #c01808; }
h1 { margin: 0; padding: 0 2px; font: 12px/18px "Liberation Sans", "Noto Sans CJK SC", sans-serif; }
nav { display: flex; gap: 20px; padding-right: 1px; line-height: 17px; font-family: "Liberation Sans", "Noto Sans CJK SC", sans-serif; }
nav a { color: #80b8ff; text-underline-offset: 2px; }
.tools { display: flex; gap: 1px; padding-top: 1px; }
button { padding: 0; border: 0; background: none; color: inherit; font: inherit; }
button svg { display: block; fill: none; stroke: #80b8ff; shape-rendering: crispEdges; }
.panel { position: relative; border-bottom: 1px solid #c01808; }
.plot { display: block; }
.legend { position: absolute; top: 1px; left: 63px; display: flex; margin: 0; padding: 0; list-style: none; line-height: 18px; white-space: nowrap; }
.legend i { font-size: 9px; font-style: normal; }
.crisp, .grid, .fib, .frame, .selected { shape-rendering: crispEdges; }
.grid { stroke: #800000; stroke-dasharray: 1 1; }
.zero { stroke: #d02020; }
.fib { stroke: #d0d0d0; stroke-dasharray: 4 3; }
.solid { stroke-dasharray: none; }
.frame { stroke: #c01808; }
.selected { fill: none; stroke: #c01808; stroke-width: 2; }
.scale { fill: #c0c0c0; font: bold 13px "Liberation Sans", sans-serif; text-anchor: end; }
.fib-label { fill: #b8b8b8; font-size: 11px; }
.red { fill: #ff3c3c; }
.hollow { fill: none; stroke: #ff3c3c; }
.cyan { fill: #00ffff; }
.line { fill: none; stroke-width: 1; }
.knife { stroke: #ff0000; stroke-width: 3; }
.extreme { fill: #e8e8e8; font: bold 12px "Liberation Sans", sans-serif; }
.pointer { fill: none; stroke: #e8e8e8; }
.date { fill: #e8e8e8; font: 11px "Liberation Sans", "Noto Sans CJK SC", sans-serif; text-anchor: middle; }
.period { font-size: 12px; text-anchor: end; }

.board { flex: 0 0 240px; display: flex; flex-direction: column; border-left: 1px solid #c01808; font-family: "DejaVu Sans Mono", "Noto Sans CJK SC", monospace; }
.title { display: flex; height: 24px; border-bottom: 1px solid #c01808; }
h2 { flex: 1; margin: 0; padding-left: 6px; color: #ffff00; font: 20px/24px "Liberation Serif", "Noto Sans CJK SC", serif; text-align: center; }
h2 span { font-size: 17px; }
.title button { align-self: flex-start; padding: 1px 1px 0 0; }
.ratio { height: 4px; padding: 0 1px; background: #00e600; background-clip: content-box; border-bottom: 1px solid #c01808; }
.ratio i { display: block; width: 55%; height: 4px; background: #ff3c3c; }
.offer { display: grid; grid-template-columns: 44px 80px 1fr; align-items: center; height: 30px; padding-left: 4px; border-bottom: 1px solid #c01808; font-size: 14px; }
.offer b { font: bold 21px/30px "Liberation Sans", sans-serif; }
.up { color: #ff3c3c; }
.down { color: #00f000; }
.flat { color: #f0f0f0; }
.volume { color: #ffff00; }
.quotes { display: grid; grid-template-columns: 109px 107px; grid-auto-rows: 20px; column-gap: 14px; margin: 0; padding: 0 5px 0 4px; border-bottom: 1px solid #c01808; line-height: 20px; }
.quotes div { display: flex; justify-content: space-between; }
.quotes dt { font-size: 14px; }
.quotes dd { margin: 0; font-weight: bold; }
.units { display: flex; align-items: center; height: 20px; padding: 0 5px 0 4px; border-bottom: 1px solid #c01808; background: #484848; font: 14px/20px "Liberation Sans", "Noto Sans CJK SC", sans-serif; }
.gram { flex: 1; margin-right: 46px; text-align: right; }
.ounce { display: flex; align-items: center; gap: 6px; }
.ounce svg { stroke: #ffff00; stroke-width: 2; }
table { width: 100%; border-collapse: collapse; table-layout: fixed; margin-bottom: 3px; }
th, td { box-sizing: border-box; height: 22px; padding: 0 5px 0 4px; line-height: 20px; text-align: right; }
th { padding-right: 4px; color: #808080; font-size: 14px; font-weight: normal; }
th:first-child { text-align: left; }
th:nth-child(1) { width: 45px; }
th:nth-child(2) { width: 102px; }
td { font-weight: bold; }
.second { font: 11px/20px "Liberation Sans", sans-serif; }
.minute { white-space: nowrap; }
.tabs { flex: 1; border-top: 1px solid #c01808; }
.tabs button { display: block; width: 38px; height: 15px; margin-top: -1px; border: 1px solid #c01808; border-top-color: #000; border-left: 0; border-radius: 0 0 3px 3px; font: 12px/12px "Liberation Sans", "Noto Sans CJK SC", sans-serif; text-align: center; }
</style>
